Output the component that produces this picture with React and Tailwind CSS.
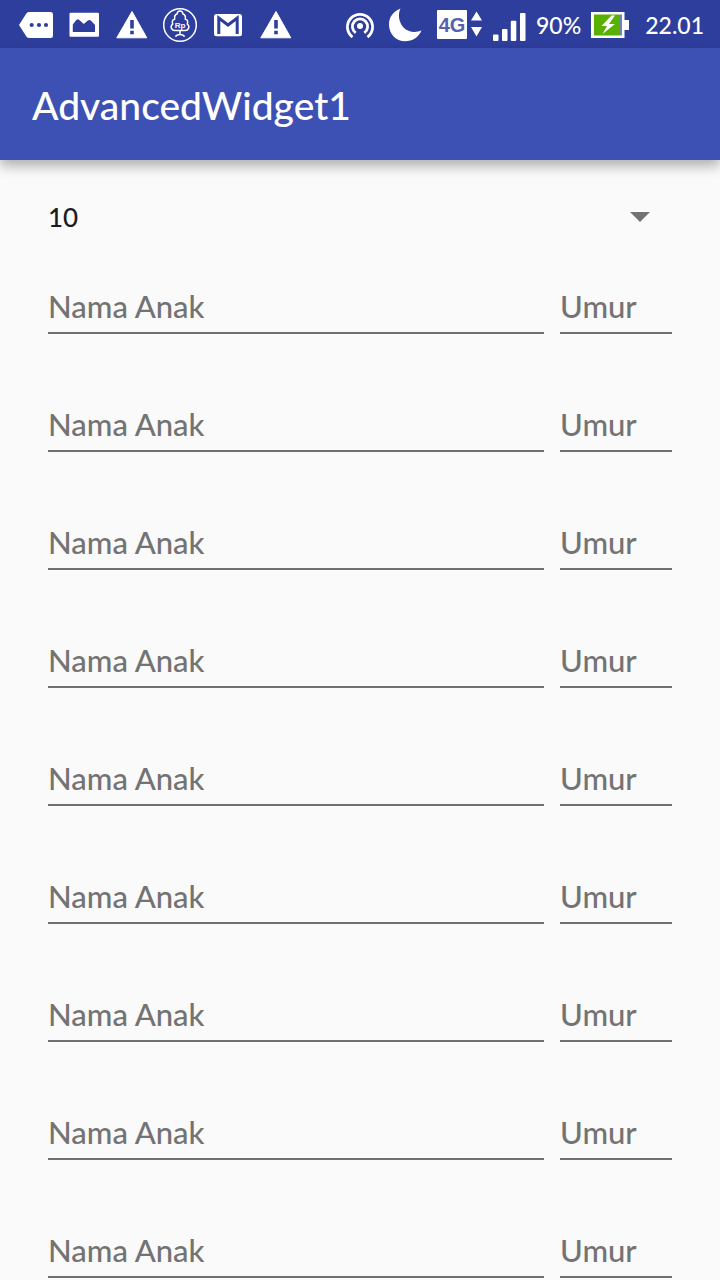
import { useState } from 'react';

function MoreTagIcon() {
  return (
    <svg className="h-12 w-12" viewBox="0 0 48 48" aria-hidden="true">
      <path d="M17 12h21.500q2.500 0 2.500 2.500v21q0 2.500-2.500 2.500H17q-2 0-3-2L7 25l7-11q1-2 3-2z" fill="#fff" />
      <g fill="#2e3e9d">
        <circle cx="19.700" cy="25" r="2.100" />
        <circle cx="27" cy="25" r="2.100" />
        <circle cx="34" cy="25" r="2.100" />
      </g>
    </svg>
  );
}

function PictureIcon() {
  return (
    <svg className="h-12 w-12" viewBox="0 0 48 48" aria-hidden="true">
      <rect x="9.500" y="12.700" width="29.500" height="24" rx="1" fill="#fff" />
      <path d="M12.800 32v-7.500l3.500-4.500q1.500-1.500 3 0l4.500 4 4-3.500q1.500-1 3 0l4.200 4.500v7z" fill="#2e3e9d" />
    </svg>
  );
}

function WarningIcon() {
  return (
    <svg className="h-12 w-12" viewBox="0 0 48 48" aria-hidden="true">
      <path d="M24 11.500 38.800 37.800H8.800z" fill="#fff" stroke="#fff" strokeLinejoin="round" />
      <path d="M22.200 20h3.600v8.500h-3.600zM22.200 30.800h3.600v3.400h-3.600z" fill="#2e3e9d" />
    </svg>
  );
}

function MoneyTreeIcon() {
  return (
    <svg className="h-12 w-12" viewBox="0 0 48 48" fill="none" stroke="#fff" aria-hidden="true">
      <circle cx="24" cy="25" r="16.300" strokeWidth="1.500" />
      <path
        d="M19 30.500c-4 0-5-4.500-2.300-6.500-1-2.500 0-4.500 2-5-.5-3 .8-4.500 2.300-5 .5-4 5.500-4 6 0 1.500.5 2.800 2 2.300 5 2 .5 3 2.500 2 5 2.700 2 1.700 6.500-2.300 6.500zM24 30.500v4M19.500 36.700q1-2.200 4.500-2.200t4.500 2.200"
        strokeWidth="1.500"
      />
      <text x="24" y="27.500" textAnchor="middle" fontFamily="Liberation Sans, sans-serif" fontSize="8" fontWeight="700" fill="#fff" stroke="none">
        Rp
      </text>
    </svg>
  );
}

function MailIcon() {
  return (
    <svg className="h-12 w-12" viewBox="0 0 48 48" aria-hidden="true">
      <rect x="10" y="14" width="28" height="22.300" rx="2.500" fill="#fff" />
      <path d="M14.800 34V18L24 25l9.200-7v16" fill="none" stroke="#2e3e9d" strokeWidth="3" />
    </svg>
  );
}

function HotspotIcon() {
  return (
    <svg className="h-12 w-8" viewBox="0 0 32 48" fill="none" stroke="#fff" strokeWidth="2.800" aria-hidden="true">
      <path d="M8.500 37.100A12.600 12.600 0 1 1 23.500 37.100M11.700 32.800A7.600 7.600 0 1 1 20.300 32.800" />
      <circle cx="16" cy="26" r="3" fill="#fff" stroke="none" />
    </svg>
  );
}

function MoonIcon() {
  return (
    <svg className="h-12 w-9" viewBox="0 0 36 48" aria-hidden="true">
      <path d="M12.500 8.500C4 12 1 18 1 24.500c0 9.500 7 16.800 16 16.800 7.500 0 13.500-4 16.500-10.800-6 2.500-13.500 1.800-18-3-4.500-5-6-13-3-19z" fill="#fff" />
    </svg>
  );
}

function NetworkIcon() {
  return (
    <svg className="h-12 w-12" viewBox="0 0 48 48" fill="#fff" aria-hidden="true">
      <rect x="1" y="10" width="30" height="29" rx="1" />
      <text x="16" y="32" textAnchor="middle" fontFamily="Liberation Sans, sans-serif" fontSize="20" fontWeight="700" fill="#5560ae">
        4G
      </text>
      <path d="m40.500 11.500 5.500 9H35zM35 27h11l-5.500 9.500z" />
    </svg>
  );
}

function SignalIcon() {
  return (
    <svg className="h-12 w-9" viewBox="0 0 36 48" fill="#fff" aria-hidden="true">
      <rect x="1" y="34.500" width="5.500" height="6.500" rx="1" />
      <rect x="10" y="29" width="5.500" height="12" rx="1" />
      <rect x="18.800" y="20.800" width="5.500" height="20.200" rx="1" />
      <rect x="28" y="13" width="5.500" height="28" rx="1" />
    </svg>
  );
}

function BatteryIcon() {
  return (
    <svg className="h-12 w-10" viewBox="0 0 40 48" aria-hidden="true">
      <path d="M0 12h33.500v8H38v10h-4.500v8H0z" fill="#fff" />
      <path d="M3 14.500h25v21H3z" fill="#58b000" />
      <path d="M28 14.500h3v21h-3z" fill="#7480bd" />
      <path d="m20.500 15.500-10 10.500h5.500l-4.500 8 12.500-10h-6l6-8.500z" fill="#fff" />
    </svg>
  );
}

function StatusBar() {
  return (
    <div className="flex h-12 shrink-0 items-center justify-between bg-[#2e3e9d] pr-4 pl-3 text-[23px] text-white">
      <div className="flex">
        <MoreTagIcon />
        <PictureIcon />
        <WarningIcon />
        <MoneyTreeIcon />
        <MailIcon />
        <WarningIcon />
      </div>
      <div className="flex items-center">
        <span className="mr-3 flex"><HotspotIcon /></span>
        <MoonIcon />
        <span className="ml-3 flex"><NetworkIcon /></span>
        <span className="ml-2 flex"><SignalIcon /></span>
        <span className="ml-2 pt-0.5">90%</span>
        <span className="mr-3.5 ml-2.5 flex"><BatteryIcon /></span>
        <span className="pt-0.5">22.01</span>
      </div>
    </div>
  );
}

const fieldClass =
  'h-14 min-w-0 border-b-2 border-[#707070] bg-transparent pt-0.5 text-[31px] text-[#212121] outline-none placeholder:text-[#737373] placeholder:opacity-100';

function ChildRow({ index }) {
  return (
    <div className="flex gap-4">
      <input type="text" aria-label={`Nama Anak ${index}`} placeholder="Nama Anak" className={`${fieldClass} flex-1`} />
      <input type="text" inputMode="numeric" aria-label={`Umur ${index}`} placeholder="Umur" className={`${fieldClass} w-28`} />
    </div>
  );
}

export default function App() {
  const [count, setCount] = useState(10);
  const options = Array.from({ length: 10 }, (_, i) => i + 1);

  return (
    <div className="flex h-screen flex-col bg-[#fafafa] font-['Lato','Noto_Sans',sans-serif] font-medium">
      <StatusBar />
      <header className="z-10 flex h-28 shrink-0 items-center bg-[#3d50b4] px-8 pt-0.5 shadow-[0_6px_12px_rgba(0,0,0,0.3)]">
        <h1 className="text-[39px] leading-12 font-medium text-white">AdvancedWidget1</h1>
      </header>
      <main className="min-h-0 flex-1 overflow-y-auto px-12 pt-8 [scrollbar-width:none]">
        <div className="relative flex h-12 items-center">
          <select
            aria-label="Jumlah anak"
            value={count}
            onChange={(e) => setCount(Number(e.target.value))}
            className="h-12 w-full appearance-none bg-transparent pt-0.5 text-[26px] text-[#1c1c1c] outline-none"
          >
            {options.map((n) => (
              <option key={n} value={n}>{n}</option>
            ))}
          </select>
          <svg className="pointer-events-none absolute right-5 h-5 w-6" viewBox="0 0 24 20" aria-hidden="true">
            <path d="M2 6h20L12 16z" fill="#737373" />
          </svg>
        </div>
        <div className="flex flex-col gap-[62px] pt-[38px] pb-8">
          {options.slice(0, count).map((n) => (
            <ChildRow key={n} index={n} />
          ))}
        </div>
      </main>
    </div>
  );
}
